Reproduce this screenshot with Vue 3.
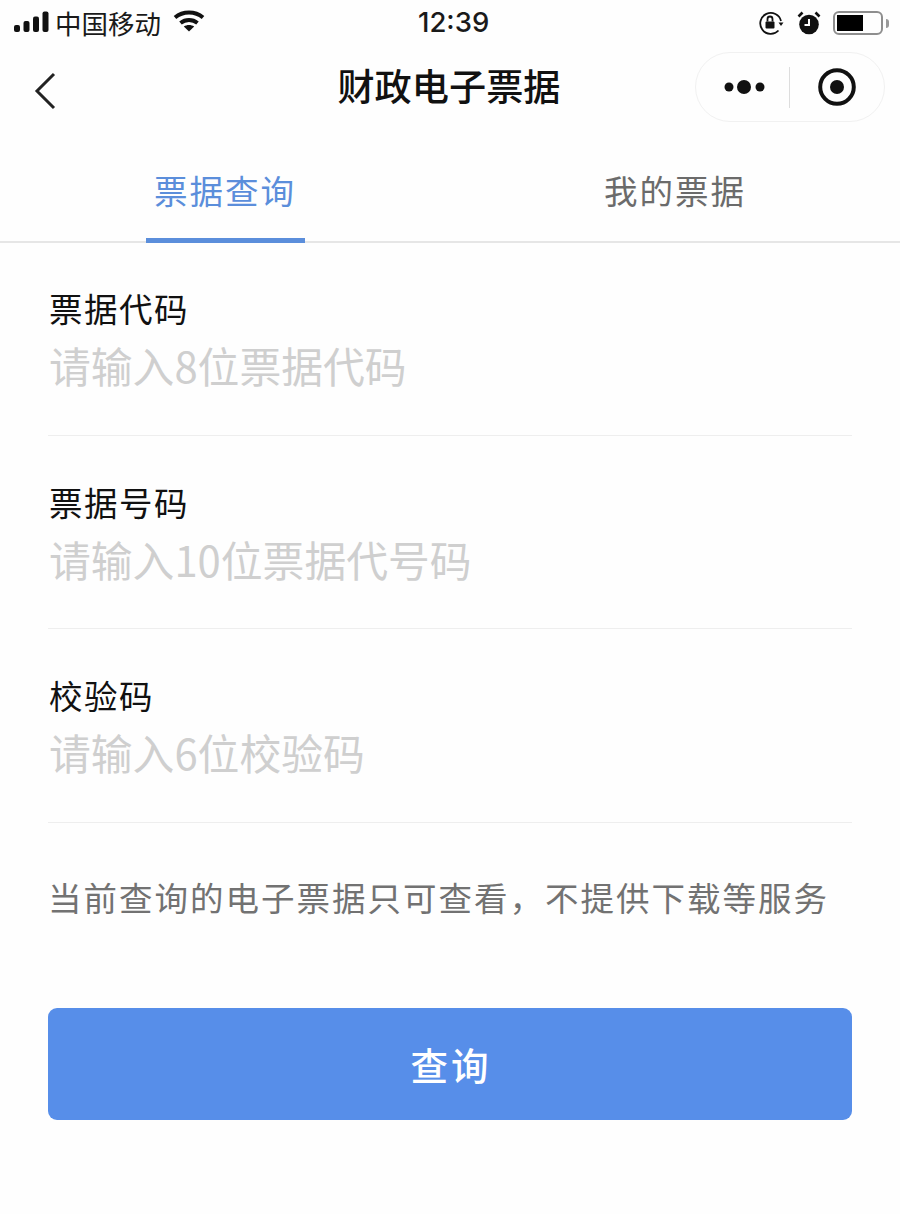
<script setup>
const fields = [
  { label: '票据代码', placeholder: '请输入8位票据代码' },
  { label: '票据号码', placeholder: '请输入10位票据代号码' },
  { label: '校验码', placeholder: '请输入6位校验码' },
]
</script>

<template>
  <div class="page">
    <header class="status">
      <div class="status-left">
        <svg class="signal" width="36" height="24" viewBox="0 0 36 24" fill="#111">
          <rect x="0" y="15" width="6" height="7" rx="2" />
          <rect x="9.500" y="11" width="6" height="11" rx="2" />
          <rect x="19" y="6.500" width="6" height="15.500" rx="2" />
          <rect x="28.500" y="1.500" width="6" height="20.500" rx="2" />
        </svg>
        <span class="carrier">中国移动</span>
        <svg class="wifi" width="32" height="24" viewBox="0 0 32 24" fill="none" stroke="#111" stroke-width="4">
          <path d="M2 8.500C10 1.800 22 1.800 30 8.500" />
          <path d="M7.500 14C12.500 10 19.500 10 24.500 14" />
          <path d="M16 22.500L10.800 17.500C14 15.500 18 15.500 21.200 17.500Z" fill="#111" stroke="none" />
        </svg>
      </div>
      <span class="time">12:39</span>
      <div class="status-right">
        <svg width="26" height="26" viewBox="0 0 26 26" fill="none" stroke="#111" stroke-width="1.800">
          <path d="M23 11A10.500 10.500 0 1 0 20.500 20.500" />
          <path d="M20.500 12.500H25.500L23 16Z" fill="#111" stroke="none" />
          <rect x="7.500" y="11.500" width="9" height="7" rx="1" fill="#111" stroke="none" />
          <path d="M9.500 11.500V9A2.500 2.500 0 0 1 14.500 9V11.500" />
        </svg>
        <svg class="alarm" width="24" height="24" viewBox="0 0 24 24">
          <circle cx="12" cy="13.500" r="9.800" fill="#111" />
          <path d="M12 8V14H7.500" fill="none" stroke="#fff" stroke-width="2" />
          <path d="M1.500 5.500L5.500 1.500M22.500 5.500L18.500 1.500" stroke="#111" stroke-width="2.600" />
        </svg>
        <div class="battery"><div class="battery-fill"></div></div>
        <div class="battery-tip"></div>
      </div>
    </header>

    <nav class="nav">
      <svg class="back" width="24" height="38" viewBox="0 0 24 38" fill="none" stroke="#222" stroke-width="3">
        <path d="M20 2L3 19L20 36" />
      </svg>
      <h1 class="title">财政电子票据</h1>
      <div class="capsule">
        <svg width="44" height="16" viewBox="0 0 44 16" fill="#111">
          <circle cx="6" cy="8" r="4.500" />
          <circle cx="21" cy="8" r="7" />
          <circle cx="37" cy="8" r="4.500" />
        </svg>
        <span class="capsule-line"></span>
        <svg width="40" height="40" viewBox="0 0 40 40">
          <circle cx="20" cy="20" r="16.800" fill="none" stroke="#111" stroke-width="4" />
          <circle cx="20" cy="20" r="7" fill="#111" />
        </svg>
      </div>
    </nav>

    <div class="tabs">
      <div class="tab active"><span>票据查询</span></div>
      <div class="tab"><span>我的票据</span></div>
    </div>

    <main class="form">
      <div v-for="f in fields" :key="f.label" class="field">
        <div class="label">{{ f.label }}</div>
        <div class="placeholder">{{ f.placeholder }}</div>
      </div>
      <p class="note">当前查询的电子票据只可查看，不提供下载等服务</p>
      <button class="submit">查询</button>
    </main>
  </div>
</template>

<style>
html, body { margin: 0; background: #fefefe; }
</style>

<style scoped>
.page {
  width: 900px;
  height: 1214px;
  overflow: hidden;
  background: #fefefe;
  font-family: "Noto Sans CJK SC", "Liberation Sans", sans-serif;
  color: #111;
}
.status {
  height: 46px;
  padding: 0 11px 0 14px;
  display: flex;
  align-items: center;
  justify-content: space-between;
  position: relative;
}
.status-left { display: flex; align-items: center; }
.signal { margin-right: 5px; margin-bottom: 2px; }
.carrier { font-size: 26.500px; line-height: 46px; color: #1a1a1a; }
.wifi { margin-left: 12px; margin-bottom: 4px; }
.time {
  position: absolute;
  left: 418px;
  top: -1px;
  font-size: 27.500px;
  font-weight: 500;
  line-height: 46px;
  font-family: "Inter", "Liberation Sans", sans-serif;
  color: #1a1a1a;
}
.status-right { display: flex; align-items: center; }
.alarm { margin-left: 13px; }
.battery {
  width: 50px;
  height: 24px;
  margin-left: 12px;
  box-sizing: border-box;
  border: 2px solid #8e8e8e;
  border-radius: 6px;
  padding: 2px;
}
.battery-fill { width: 26px; height: 100%; background: #000; }
.battery-tip {
  width: 3px;
  height: 9px;
  margin-left: 3px;
  background: #999;
  border-radius: 0 3px 3px 0;
}
.nav {
  height: 86px;
  display: flex;
  align-items: center;
  justify-content: center;
  position: relative;
}
.back { position: absolute; left: 34px; top: 26px; }
.title {
  margin: 0 2px 8px 0;
  font-size: 37.200px;
  line-height: 78px;
  font-weight: 500;
  color: #111;
}
.capsule {
  position: absolute;
  left: 695px;
  top: 6px;
  box-sizing: border-box;
  width: 190px;
  height: 70px;
  border: 1px solid #f1f1f1;
  border-radius: 35px;
  display: flex;
  align-items: center;
  padding-left: 27px;
}
.capsule-line {
  width: 1px;
  height: 41px;
  background: #ddd;
  margin: 0 27px 0 22px;
}
.tabs {
  margin-top: 18px;
  height: 93px;
  box-sizing: border-box;
  display: grid;
  grid-template-columns: 450px 450px;
  border-bottom: 2px solid #e6e6e6;
}
.tab {
  display: flex;
  justify-content: center;
  font-size: 33.500px;
  color: #6b6b6b;
}
.tab span {
  display: block;
  width: 159px;
  height: 93px;
  box-sizing: border-box;
  text-align: center;
  line-height: 80px;
  letter-spacing: 2px;
}
.tab.active { color: #5b8edb; }
.tab.active span { border-bottom: 5px solid #5b8edb; }
.form { padding: 0 48px; }
.field {
  height: 193.500px;
  box-sizing: border-box;
  border-bottom: 1px solid #eeeeee;
  padding-top: 41px;
}
.field:first-child { height: 192.500px; padding-top: 40px; }
.label {
  font-size: 33.500px;
  line-height: 50px;
  letter-spacing: 1.500px;
  color: #111;
  margin: 0 0 -1px 1px;
}
.placeholder {
  font-size: 41.800px;
  line-height: 66px;
  color: #cfcfcf;
  margin-left: 1px;
}
.note {
  margin: 46px 0 0;
  font-size: 33.500px;
  line-height: 56px;
  letter-spacing: 2px;
  white-space: nowrap;
  color: #727272;
}
.submit {
  display: block;
  width: 804px;
  height: 112px;
  margin-top: 83px;
  border: none;
  border-radius: 9px;
  background: #578ee9;
  color: #fff;
  font: inherit;
  font-size: 37.500px;
  font-weight: 500;
  letter-spacing: 3px;
  padding-left: 8px;
}
</style>
